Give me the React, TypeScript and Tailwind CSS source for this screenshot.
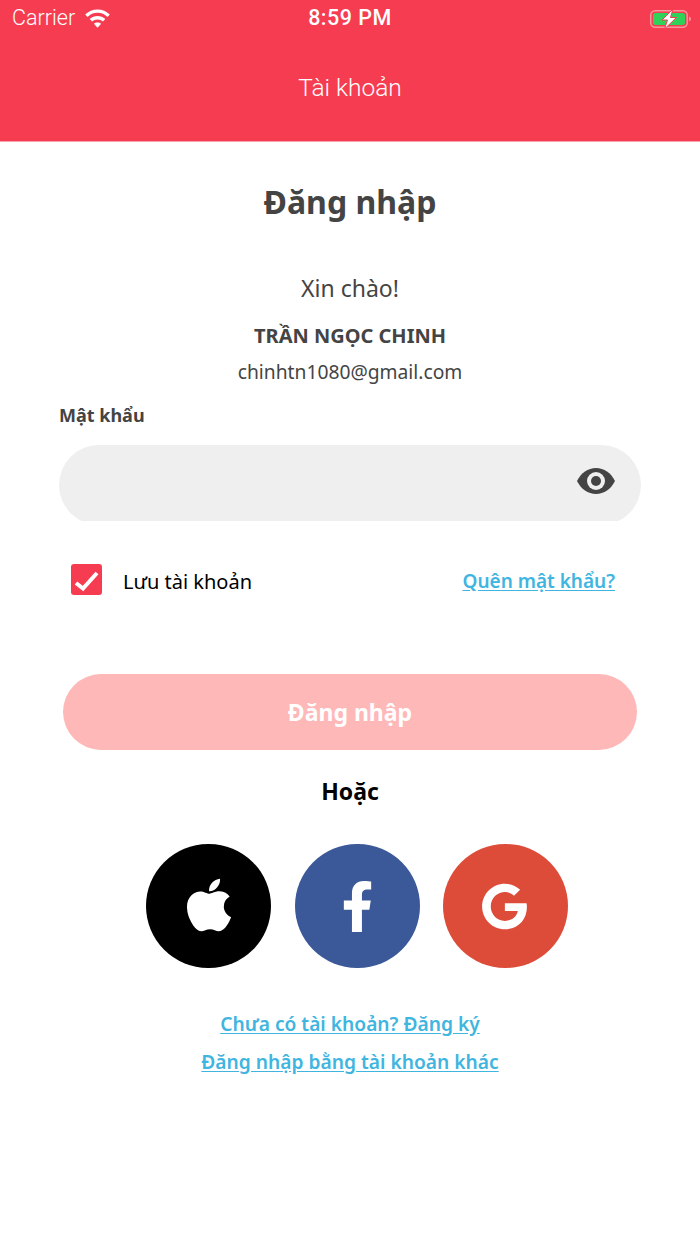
import { FaApple, FaFacebookF, FaGoogle } from 'react-icons/fa';

const bodyFont = "font-['Noto_Sans',sans-serif]";

function WifiIcon() {
  return (
    <svg width="27" height="20" viewBox="0 0 26 20" fill="white">
      <path d="M13 0.5C8.2 0.5 3.9 2.4 0.7 5.500L3 7.900C5.600 5.400 9.100 3.800 13 3.800s7.400 1.600 10 4.100l2.300-2.400C22.100 2.400 17.800 0.500 13 0.500z" />
      <path d="M13 7C10 7 7.300 8.200 5.200 10.100l2.400 2.400C9 11.200 10.900 10.400 13 10.400s4 .8 5.400 2.100l2.400-2.400C18.700 8.200 16 7 13 7z" />
      <path d="M13 13.400c-1.400 0-2.700.5-3.600 1.400l3.600 3.900 3.600-3.900c-.9-.9-2.200-1.400-3.600-1.400z" />
    </svg>
  );
}

function BatteryIcon() {
  return (
    <svg width="41" height="20" viewBox="0 0 41 20">
      <rect x="0.75" y="1.750" width="36.500" height="16.500" rx="4.500" fill="none" stroke="#fff" strokeOpacity="0.45" strokeWidth="1.500" />
      <rect x="3" y="4" width="32" height="12" rx="2.500" fill="#2fd158" />
      <path d="M39 7.500c1.200.4 2 1.400 2 2.500s-.8 2.100-2 2.500z" fill="#fff" fillOpacity="0.45" />
      <path d="M23 0L12 11H17.500L14.500 20L26.500 8.500H20.500z" fill="#fff" stroke="#f63c50" strokeWidth="1" />
    </svg>
  );
}

function EyeIcon() {
  return (
    <svg width="38" height="26" viewBox="0 0 38 26">
      <path d="M0 13C4 5 11 0 19 0S34 5 38 13C34 21 27 26 19 26S4 21 0 13z" fill="#444444" />
      <circle cx="19" cy="13" r="9" fill="#efefef" />
      <circle cx="19" cy="13" r="5" fill="#444444" />
    </svg>
  );
}

export default function App() {
  return (
    <div className={`w-[700px] h-[1244px] bg-white flex flex-col ${bodyFont}`}>
      {/* Header */}
      <div className="h-[142px] bg-[#f63c50] border-b border-[#f7a3ab] flex flex-col text-white font-['Roboto',sans-serif] shrink-0">
        <div className="h-[37px] pl-3 pr-[9px] flex items-center justify-between relative">
          <div className="flex items-center gap-[9px]">
            <span className="text-[21.500px] font-light">Carrier</span>
            <WifiIcon />
          </div>
          <span className="absolute left-0 right-0 text-center text-[21.500px] font-medium tracking-[0.5px]">8:59 PM</span>
          <BatteryIcon />
        </div>
        <div className="flex-1 flex items-center justify-center pb-[2px]">
          <span className="text-[24.500px] font-light">Tài khoản</span>
        </div>
      </div>

      {/* Form */}
      <div className="flex flex-col items-center">
        <h1 className="mt-[37px] text-[32px] leading-[46px] font-bold text-[#444444]">Đăng nhập</h1>
        <p className="mt-[44px] text-[23px] leading-[38px] text-[#444444]">Xin chào!</p>
        <p className="mt-[15px] text-[20px] leading-[28px] font-bold text-[#444444]">TRẦN NGỌC CHINH</p>
        <p className="mt-[8px] text-[19.250px] leading-[28px] text-[#444444]">chinhtn1080@gmail.com</p>

        <div className="w-full px-[59px] mt-[14px]">
          <label className="block text-[18px] leading-[30px] font-bold text-[#444444]">Mật khẩu</label>
          <div className="mt-[15px] h-[76px] overflow-hidden">
            <div className="h-[80px] rounded-[40px] bg-[#efefef] flex items-start justify-end pr-[26px] pt-[23px]">
              <EyeIcon />
            </div>
          </div>
        </div>

        <div className="w-full pl-[71px] pr-[85px] mt-[43px] flex items-center justify-between">
          <div className="flex items-start gap-[21px]">
            <div className="w-[31px] h-[31px] rounded-[3px] bg-[#f63c50] flex items-center justify-center">
              <svg width="31" height="31" viewBox="0 0 31 31" fill="none" stroke="white" strokeWidth="4">
                <path d="M5 19L12 24.500L26 9" />
              </svg>
            </div>
            <span className="text-[20px] text-black pt-[3px]">Lưu tài khoản</span>
          </div>
          <a className="text-[19px] font-semibold text-[#3fb5e0] underline underline-offset-2 pt-[1px]">Quên mật khẩu?</a>
        </div>

        <button className="mt-[77px] w-[574px] h-[76px] rounded-[38px] bg-[#ffb8b8] text-white text-[23px] font-bold">
          Đăng nhập
        </button>

        <p className="mt-[24px] text-[23px] leading-[34px] font-bold text-black">Hoặc</p>

        <div className="mt-[36px] flex gap-[23.500px] ml-[14px]">
          <div className="w-[125px] h-[124px] rounded-full bg-black flex items-center justify-center">
            <FaApple className="text-white mb-[2px]" size={60} />
          </div>
          <div className="w-[125px] h-[124px] rounded-full bg-[#3b5998] flex items-center justify-center">
            <FaFacebookF className="text-white" size={51} />
          </div>
          <div className="w-[125px] h-[124px] rounded-full bg-[#dd4b39] flex items-center justify-center">
            <FaGoogle className="text-white mr-[2px]" size={47} />
          </div>
        </div>

        <a className="mt-[40px] text-[19.200px] leading-[32px] font-semibold text-[#3fb5e0] underline underline-offset-2">Chưa có tài khoản? Đăng ký</a>
        <a className="mt-[6px] text-[19.200px] leading-[32px] font-semibold text-[#3fb5e0] underline underline-offset-2">Đăng nhập bằng tài khoản khác</a>
      </div>
    </div>
  );
}
